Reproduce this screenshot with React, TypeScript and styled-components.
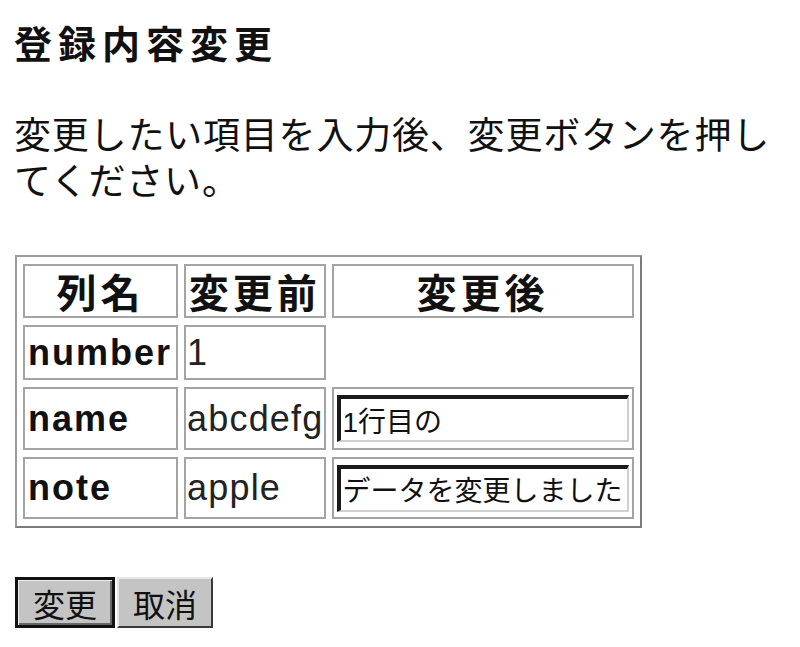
import styled, { createGlobalStyle } from 'styled-components';

const GlobalStyle = createGlobalStyle`
  html, body {
    margin: 0;
    padding: 0;
    background: #ffffff;
  }
  body {
    font-family: "Liberation Sans", "Noto Sans CJK JP", sans-serif;
    color: #111111;
  }
`;

const Page = styled.div`
  padding: 18px 14px 20px 14px;
  font-family: "Liberation Sans", "Noto Sans CJK JP", sans-serif;
`;

const Title = styled.h1`
  margin: 0;
  font-family: "Noto Sans CJK JP", sans-serif;
  font-size: 38px;
  line-height: 48px;
  font-weight: 700;
  letter-spacing: 6px;
`;

const Lead = styled.p`
  margin: 44px 0 0 0;
  width: 770px;
  font-family: "Noto Sans CJK JP", sans-serif;
  font-size: 37px;
  line-height: 46px;
  font-weight: 400;
  letter-spacing: 0.8px;
`;

const EditTable = styled.table`
  margin: 53px 0 0 1px;
  border-collapse: separate;
  border-spacing: 6px 7px;
  border: 2px solid #9c9c9c;
  border-right-color: #7c7c7c;
  border-bottom-color: #7c7c7c;
`;

const HeadCell = styled.th<{ $w: number }>`
  box-sizing: border-box;
  width: ${(p) => p.$w}px;
  height: 54px;
  padding: 0;
  border: 2px solid #a4a4a4;
  font-family: "Noto Sans CJK JP", sans-serif;
  font-size: 40px;
  line-height: 48px;
  font-weight: 700;
  letter-spacing: 4px;
  text-align: center;
  vertical-align: middle;
`;

const Row = styled.tr<{ $h: number }>`
  height: ${(p) => p.$h}px;
`;

const NameCell = styled.td`
  box-sizing: border-box;
  padding: 0 0 0 3px;
  border: 2px solid #a4a4a4;
  font-family: "Liberation Sans", sans-serif;
  font-size: 36px;
  font-weight: 700;
  letter-spacing: 2px;
  vertical-align: middle;
`;

const ValueCell = styled.td`
  box-sizing: border-box;
  padding: 0 0 0 1px;
  border: 2px solid #a4a4a4;
  font-family: "Liberation Sans", sans-serif;
  font-size: 36px;
  font-weight: 400;
  letter-spacing: 1.2px;
  color: #222222;
  vertical-align: middle;
`;

const InputCell = styled.td<{ $empty?: boolean }>`
  box-sizing: border-box;
  padding: 0 3px;
  border: ${(p) => (p.$empty ? 'none' : '2px solid #a4a4a4')};
  vertical-align: middle;
`;

const TextBox = styled.input`
  box-sizing: border-box;
  display: block;
  width: 292px;
  height: 47px;
  margin: 0;
  padding: 0 2px;
  border-style: solid;
  border-width: 4px 2px 2px 4px;
  border-color: #1a1a1a #cfcfcf #cfcfcf #1a1a1a;
  outline: none;
  background: #ffffff;
  font-family: "Liberation Sans", "Noto Sans CJK JP", sans-serif;
  font-size: 28px;
  color: #111111;
`;

const Actions = styled.div`
  display: flex;
  gap: 2px;
  margin-top: 49px;
  margin-left: 1px;
`;

const Button = styled.button<{ $primary?: boolean }>`
  box-sizing: border-box;
  height: 51px;
  padding: 0 ${(p) => (p.$primary ? '15px' : '14px')};
  background: #c4c4c4;
  font-family: "Noto Sans CJK JP", sans-serif;
  font-size: 32px;
  line-height: 44px;
  color: #111111;
  cursor: pointer;
  border-style: solid;
  border-width: ${(p) => (p.$primary ? '3px' : '2px')};
  border-color: ${(p) =>
    p.$primary ? '#111111' : '#e6e6e6 #3a3a3a #3a3a3a #e6e6e6'};
  box-shadow: ${(p) =>
    p.$primary ? 'inset 1px 1px 0 #eeeeee, inset -2px -2px 0 #666666' : 'none'};
`;

const rows = [
  { name: 'number', before: '1', after: null as string | null, h: 55 },
  { name: 'name', before: 'abcdefg', after: '1行目の', h: 63 },
  { name: 'note', before: 'apple', after: 'データを変更しました', h: 62 },
];

export default function App() {
  return (
    <>
      <GlobalStyle />
      <Page>
        <Title>登録内容変更</Title>
        <Lead>変更したい項目を入力後、変更ボタンを押してください。</Lead>

        <EditTable>
          <tbody>
            <tr>
              <HeadCell $w={155}>列名</HeadCell>
              <HeadCell $w={141}>変更前</HeadCell>
              <HeadCell $w={302}>変更後</HeadCell>
            </tr>
            {rows.map((r) => (
              <Row key={r.name} $h={r.h}>
                <NameCell>{r.name}</NameCell>
                <ValueCell>{r.before}</ValueCell>
                {r.after === null ? (
                  <InputCell $empty />
                ) : (
                  <InputCell>
                    <TextBox type="text" defaultValue={r.after} />
                  </InputCell>
                )}
              </Row>
            ))}
          </tbody>
        </EditTable>

        <Actions>
          <Button $primary type="submit">変更</Button>
          <Button type="reset">取消</Button>
        </Actions>
      </Page>
    </>
  );
}
